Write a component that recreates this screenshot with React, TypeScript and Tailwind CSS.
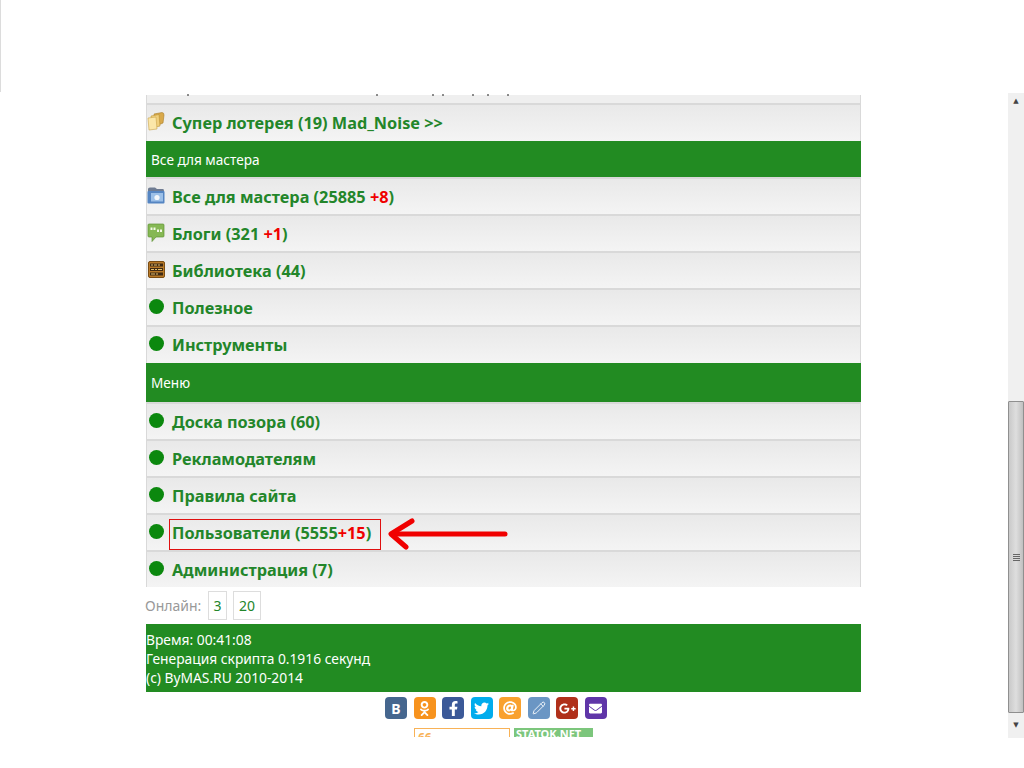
import { FaOdnoklassniki, FaFacebookF, FaTwitter, FaAt, FaGooglePlusG, FaEnvelope } from "react-icons/fa";
import { Pencil } from "lucide-react";

const FONT = "font-['Noto_Sans','DejaVu_Sans',sans-serif]";

/* ─── Row icons ───────────────────────────────────────────────────────────── */
function Dot() {
  return <span className="block w-[15px] h-[15px] rounded-full bg-[#0b880e] mb-[4px]" />;
}

function FolderIcon() {
  return (
    <svg width="18" height="19" viewBox="0 0 18 19" className="mb-[4px]">
      <path d="M7 2 L15 0.5 Q17 0.5 17 3 L16 11 L9 14 Z" fill="#d9a94a" stroke="#a87c26" strokeWidth="0.6" />
      <path d="M4 4 L12 2.5 L13 14 L5 16 Z" fill="#f0cf7c" stroke="#bb9338" strokeWidth="0.6" />
      <path d="M1 6 L9 5 L10 17 L2 18 Z" fill="#fbe7a9" stroke="#c9a24a" strokeWidth="0.6" />
    </svg>
  );
}

function PhotoIcon() {
  return (
    <svg width="18" height="17" viewBox="0 0 18 17" className="mb-[4px]">
      <path d="M1 2 Q1 0.5 3 0.5 H8 L10 2 H16 Q17 2 17 4 V6 H1 Z" fill="#6f7c92" />
      <rect x="0.5" y="4" width="17" height="12.5" rx="1" fill="#5585c2" />
      <rect x="4" y="6" width="12" height="8.5" fill="#9cc0e8" />
      <circle cx="10" cy="10.5" r="2.6" fill="#f2f6fb" />
    </svg>
  );
}

function ChatIcon() {
  return (
    <svg width="18" height="19" viewBox="0 0 18 19" className="mb-[4px]">
      <path d="M2 1 H16 Q17 1 17 2 V13 Q17 14 16 14 H9 L5 18.5 V14 H2 Q1 14 1 13 V2 Q1 1 2 1 Z" fill="#86b854" stroke="#5f9436" strokeWidth="0.7" />
      <path d="M3.5 4.5 h2 v2.5 h-2 z M6.5 4.5 h2 v2.5 h-2 z M10 6.5 h2 v2.5 h-2 z M13 6.5 h2 v2.5 h-2 z" fill="#f3f9e8" />
    </svg>
  );
}

function BooksIcon() {
  return (
    <svg width="17" height="17" viewBox="0 0 17 17" className="mb-[4px]">
      <rect x="0.5" y="0.5" width="16" height="16" rx="1.5" fill="#b97a28" stroke="#7a4d14" />
      <rect x="2" y="2.5" width="13" height="3" fill="#3f2a14" />
      <rect x="2" y="7" width="13" height="3" fill="#3f2a14" />
      <rect x="2" y="11.5" width="13" height="3" fill="#3f2a14" />
      <path d="M3 4h2M6 4h3M10 4h2M3 8.5h3M7 8.5h2M10 8.5h4M3 13h4M8 13h2" stroke="#e4c070" strokeWidth="1" />
    </svg>
  );
}

/* ─── Rows ────────────────────────────────────────────────────────────────── */
function Row({ icon, children, tall = false }: { icon: React.ReactNode; children: React.ReactNode; tall?: boolean }) {
  return (
    <div className={`${tall ? "h-[38px]" : "h-[37px] pt-[2px]"} flex items-center border-l border-r border-t-2 border-[#d9d9d9] bg-gradient-to-b from-[#e9e9e9] to-[#f4f4f4] text-[#23862a] text-[16.3px] font-bold`}>
      <span className="w-[18px] flex justify-center shrink-0">{icon}</span>
      <span className="ml-[7px]">{children}</span>
    </div>
  );
}

function Heading({ children, tall = false }: { children: React.ReactNode; tall?: boolean }) {
  return (
    <div className={`${tall ? "h-[39px]" : "h-[36px]"} flex items-center pl-[5px] pt-[2px] bg-[#228b22] text-white text-[13.6px]`}>
      {children}
    </div>
  );
}

function Plus({ children }: { children: React.ReactNode }) {
  return <span className="text-[#f00000]">{children}</span>;
}

/* ─── Socials ─────────────────────────────────────────────────────────────── */
const SOCIALS = [
  { bg: "bg-[#45668e]", icon: <span className="text-[14px] font-bold">В</span> },
  { bg: "bg-[#f7931e]", icon: <FaOdnoklassniki size={15} /> },
  { bg: "bg-[#3b5998]", icon: <FaFacebookF size={15} /> },
  { bg: "bg-[#00aced]", icon: <FaTwitter size={15} /> },
  { bg: "bg-[#f9a12e]", icon: <FaAt size={14} /> },
  { bg: "bg-[#6b96c4]", icon: <Pencil size={14} strokeWidth={1.5} /> },
  { bg: "bg-[#b0301a]", icon: <FaGooglePlusG size={17} /> },
  { bg: "bg-[#5f35a8]", icon: <FaEnvelope size={13} /> },
];

function App() {
  return (
    <div className={`${FONT} relative w-[1024px] h-[768px] overflow-hidden bg-white flex`}>
      {/* left edge of the clipped window */}
      <div className="absolute left-0 top-0 w-[1px] h-[92px] bg-[#dcdcdc]" />

      <main className="w-[1008px] pt-[95px] pl-[146px]">
        <div className="w-[715px]">
          <div className="h-[8px] border-l border-r border-[#d9d9d9] bg-[#efefef]" />
          <Row icon={<FolderIcon />} tall>Супер лотерея (19) Mad_Noise &gt;&gt;</Row>
          <Heading>Все для мастера</Heading>
          <Row icon={<PhotoIcon />}>Все для мастера (25885 <Plus>+8</Plus>)</Row>
          <Row icon={<ChatIcon />}>Блоги (321 <Plus>+1</Plus>)</Row>
          <Row icon={<BooksIcon />}>Библиотека (44)</Row>
          <Row icon={<Dot />}>Полезное</Row>
          <Row icon={<Dot />} tall>Инструменты</Row>
          <Heading tall>Меню</Heading>
          <Row icon={<Dot />}>Доска позора (60)</Row>
          <Row icon={<Dot />}>Рекламодателям</Row>
          <Row icon={<Dot />}>Правила сайта</Row>
          <Row icon={<Dot />}>Пользователи (5555<Plus>+15</Plus>)</Row>
          <Row icon={<Dot />}>Администрация (7)</Row>

          <div className="h-[37px] flex items-center text-[14px] text-[#999] ml-[-1px]">
            <span className="w-[63px]">Онлайн:</span>
            <span className="w-[19px] h-[29px] flex items-center justify-center border border-[#ddd] text-[#23862a]">3</span>
            <span className="ml-[6px] w-[28px] h-[29px] flex items-center justify-center border border-[#ddd] text-[#23862a]">20</span>
          </div>

          <footer className="h-[68px] pt-[6px] bg-[#228b22] text-white text-[13.8px] leading-[19px]">
            <div>Время: 00:41:08</div>
            <div>Генерация скрипта 0.1916 секунд</div>
            <div>(c) ByMAS.RU 2010-2014</div>
          </footer>

          <div className="mt-[5px] w-[222px] flex justify-between ml-[239px]">
            {SOCIALS.map((s) => (
              <span key={s.bg} className={`w-[22px] h-[22px] rounded-[4px] flex items-center justify-center text-white ${s.bg}`}>
                {s.icon}
              </span>
            ))}
          </div>

          <div className="mt-[9px] h-[9px] overflow-hidden flex gap-[4px] ml-[268px] opacity-80">
            <div className="w-[96px] h-[31px] border border-[#f7a02e] text-[#f7a02e] text-[12px] leading-[14px] font-bold pl-[3px] pt-[2px]">66</div>
            <div className="w-[79px] h-[31px] bg-[#5cb85c] text-white text-[11px] leading-[12px] font-bold pl-[2px]">STATOK.NET</div>
          </div>
        </div>
      </main>

      {/* scrollbar */}
      <div className="w-[16px] mt-[93px] h-[645px] flex flex-col bg-[#f0f0f0]">
        <div className="h-[16px] flex items-center justify-center text-[7px] text-[#444]">▲</div>
        <div className="mt-[292px] h-[312px] border border-[#8f8f8f] rounded-[1px] bg-gradient-to-r from-[#c9c9c9] via-[#dedede] to-[#c0c0c0] flex items-center justify-center">
          <span className="flex flex-col gap-[1px]">
            <span className="block w-[7px] h-px bg-[#666]" />
            <span className="block w-[7px] h-px bg-[#666]" />
            <span className="block w-[7px] h-px bg-[#666]" />
            <span className="block w-[7px] h-px bg-[#666]" />
          </span>
        </div>
        <div className="flex-1 flex items-center justify-center text-[7px] text-[#444]">▼</div>
      </div>

      {/* descenders of the clipped row above the fold */}
      <svg className="absolute left-[146px] top-[93px]" width="400" height="4" viewBox="0 0 400 4">
        <path d="M42 1v2M231 1v2M287 1v2M297 1v2M327 1v2M342 1v2M362 1v2" stroke="#444" strokeWidth="1.2" />
      </svg>

      {/* annotation box and arrow, drawn over the page */}
      <div className="absolute left-[169px] top-[519px] w-[212px] h-[31px] border border-[#e01010]" />
      <svg className="absolute left-[385px] top-[518px]" width="125" height="34" viewBox="0 0 125 34">
        <path d="M120 16 H8" fill="none" stroke="#f00000" strokeWidth="5" strokeLinecap="round" />
        <path d="M27 3 L6 16 L21 29" fill="none" stroke="#f00000" strokeWidth="5" strokeLinecap="round" strokeLinejoin="round" />
      </svg>
    </div>
  );
}

export default App;
